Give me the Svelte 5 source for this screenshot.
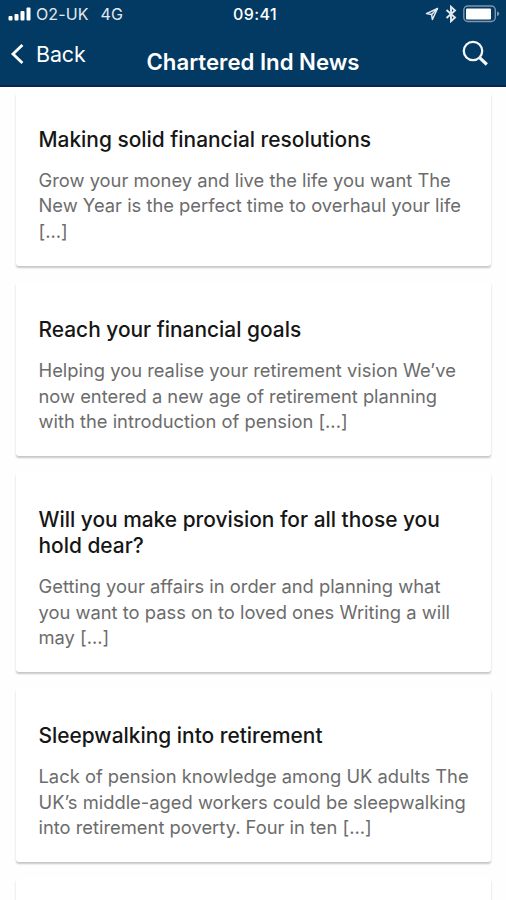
<script>
	const articles = [
		{
			title: 'Making solid financial resolutions',
			lines: ['Grow your money and live the life you want The', 'New Year is the perfect time to overhaul your life', '[...]']
		},
		{
			title: 'Reach your financial goals',
			lines: ['Helping you realise your retirement vision We’ve', 'now entered a new age of retirement planning', 'with the introduction of pension [...]']
		},
		{
			title: 'Will you make provision for all those you hold dear?',
			lines: ['Getting your affairs in order and planning what', 'you want to pass on to loved ones Writing a will', 'may [...]']
		},
		{
			title: 'Sleepwalking into retirement',
			lines: ['Lack of pension knowledge among UK adults The', 'UK’s middle-aged workers could be sleepwalking', 'into retirement poverty. Four in ten [...]']
		}
	];
</script>

<div class="screen">
	<header>
		<div class="status">
			<div class="carrier">
				<svg width="24" height="14" viewBox="0 0 24 14" fill="#fff">
					<rect x="0.5" y="9" width="4" height="4.5" rx="1" />
					<rect x="6.5" y="7" width="4" height="6.5" rx="1" />
					<rect x="12.5" y="4" width="4" height="9.5" rx="1" />
					<rect x="18.5" y="0.5" width="4" height="13" rx="1" />
				</svg>
				<span>O2-UK</span>
				<span class="network">4G</span>
			</div>
			<time>09:41</time>
			<div class="indicators">
				<svg class="location" width="14" height="14" viewBox="0 0 14 14">
					<path d="M12.5 1.5L1.5 6.6L6.6 7.6L7.4 12.5Z" fill="none" stroke="#e4e9ee" stroke-width="1.5" stroke-linejoin="round" />
					<path d="M12.5 1.5L6.6 7.6" stroke="#e4e9ee" stroke-width="1.5" />
				</svg>
				<svg class="bluetooth" width="12" height="18" viewBox="0 0 12 18">
					<path d="M1.5 5L10 12.5L6 16.2V1.8L10 5.5L1.5 13" fill="none" stroke="#e4e9ee" stroke-width="1.9" />
				</svg>
				<svg width="37" height="18" viewBox="0 0 37 18">
					<rect x="0.8" y="1" width="31.5" height="15.5" rx="4" fill="none" stroke="#8296ad" stroke-width="1.4" />
					<rect x="3" y="3.5" width="25" height="11" rx="1" fill="#fff" />
					<path d="M34 6.5Q36.3 7 36.3 8.8T34 11Z" fill="#8296ad" />
				</svg>
			</div>
		</div>
		<nav>
			<a class="back" href="#back">
				<svg width="14" height="22" viewBox="0 0 14 22">
					<path d="M12.4 2L3 11L12.4 20" fill="none" stroke="#fff" stroke-width="2.8" />
				</svg>
				<span>Back</span>
			</a>
			<h1>Chartered Ind News</h1>
			<button class="search" aria-label="Search">
				<svg width="27" height="27" viewBox="0 0 27 27" fill="none" stroke="#f4f6f8">
					<circle cx="11" cy="11" r="9.2" stroke-width="2.3" />
					<path d="M17.8 17.8L24.8 24.5" stroke-width="3.2" />
				</svg>
			</button>
		</nav>
	</header>

	<main>
		{#each articles as article}
			<article>
				<h2>{article.title}</h2>
				<p>
					{#each article.lines as line}
						<span>{line}</span>
					{/each}
				</p>
			</article>
		{/each}
		<article></article>
	</main>
</div>

<style>
	:global(body) {
		margin: 0;
		background: #fff;
	}

	.screen {
		width: 506px;
		height: 900px;
		overflow: hidden;
		font-family: Inter, 'Liberation Sans', sans-serif;
		background: #fefefe;
	}

	header {
		box-sizing: border-box;
		height: 87px;
		color: #fff;
		background: #023a63;
		border-bottom: 2px solid #0b2455;
	}

	.status {
		display: grid;
		grid-template-columns: 1fr auto 1fr;
		align-items: center;
		height: 28px;
		padding: 0 6px 0 8px;
	}

	.carrier {
		display: flex;
		align-items: center;
		color: #e4e9ee;
		font-size: 16px;
		letter-spacing: 0.1px;
	}

	.carrier span {
		margin-left: 4px;
	}

	.carrier .network {
		margin-left: 12px;
	}

	time {
		margin-left: 2px;
		font-size: 16px;
		font-weight: 500;
		letter-spacing: 0.4px;
	}

	.indicators {
		display: flex;
		align-items: center;
		justify-content: flex-end;
	}

	.location {
		margin-right: 6px;
	}

	.bluetooth {
		margin-right: 6px;
	}

	nav {
		display: grid;
		grid-template-columns: 1fr auto 1fr;
		align-items: start;
		padding: 0 17px 0 10px;
	}

	.back {
		display: flex;
		align-items: center;
		gap: 12px;
		margin-top: 13px;
		color: #fff;
		font-size: 21.4px;
		line-height: 26px;
		letter-spacing: -0.1px;
		text-decoration: none;
	}

	h1 {
		margin: 20px 0 0 7px;
		font-size: 22.2px;
		font-weight: 600;
		line-height: 28px;
	}

	.search {
		justify-self: end;
		height: 27px;
		margin-top: 12px;
		padding: 0;
		border: 0;
		background: none;
	}

	main {
		display: flex;
		flex-direction: column;
		gap: 16px;
		padding: 5px 15px 0 16px;
	}

	article {
		box-sizing: border-box;
		min-height: 174.2px;
		padding: 34.7px 22px 20.9px 22.5px;
		border-radius: 3px;
		background: #fff;
		box-shadow: 0 2px 2px rgba(0, 0, 0, 0.22);
	}

	h2 {
		margin: 0 0 15.2px;
		color: #161616;
		font-size: 20.9px;
		font-weight: 500;
		line-height: 25.8px;
	}

	p {
		margin: 0;
		color: #6c6c6c;
		font-size: 18.35px;
		line-height: 25.8px;
	}

	p span {
		display: block;
		white-space: nowrap;
	}
</style>
